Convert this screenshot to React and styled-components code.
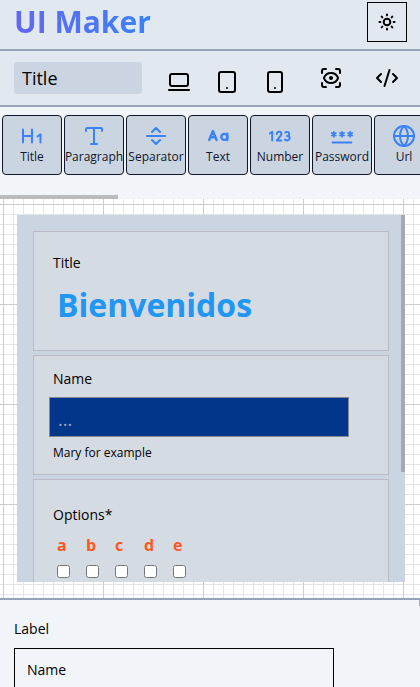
import React from "react";
import styled, { createGlobalStyle } from "styled-components";
import {
  CodeXml, Globe, LaptopMinimal, ScanEye,
  SeparatorHorizontal, Smartphone, Tablet, Type,
} from "lucide-react";

const GlobalStyle = createGlobalStyle`
  *, *::before, *::after { box-sizing: border-box; }
  body { margin: 0; color: #000; font-family: "Open Sans", "Noto Sans", sans-serif; }
  button, input { font: inherit; color: inherit; }
  button { cursor: pointer; }
`;

const Page = styled.div`
  display: grid;
  grid-template-columns: minmax(0, 1fr);
  grid-template-rows: auto auto auto minmax(0, 1fr) auto;
  height: 100vh;
  background: #f1f5f9;
`;

const Header = styled.header`
  display: flex;
  align-items: center;
  justify-content: space-between;
  height: 51px;
  padding: 0 13px 5px 14px;
  background: #e2e8f0;
  border-bottom: 2px solid #94a3b8;
`;

const Brand = styled.h1`
  margin: 0;
  font-size: 30px;
  line-height: 40px;
  font-weight: 700;
  color: transparent;
  background: linear-gradient(to right, #6366f1, #3b82f6);
  background-clip: text;
  -webkit-background-clip: text;
`;

const ThemeButton = styled.button`
  display: grid;
  place-items: center;
  width: 40px;
  height: 40px;
  padding: 0;
  background: transparent;
  border: 1px solid #000;
`;

const Toolbar = styled.div`
  display: flex;
  align-items: center;
  height: 56px;
  padding: 0 14px;
  background: #e2e8f0;
  border-bottom: 2px solid #94a3b8;
`;

const NameInput = styled.input`
  width: 128px;
  height: 32px;
  padding: 0 8px;
  font-size: 18px;
  background: #cbd5e1;
  border: 0;
  border-radius: 4px;
`;

const Devices = styled.div`
  display: flex;
  gap: 24px;
  padding-top: 8px;
  margin: 0 32px 0 25px;
`;

const Actions = styled.div`
  display: flex;
  gap: 32px;
`;

const IconButton = styled.button`
  display: flex;
  padding: 0;
  background: none;
  border: 0;
`;

const Palette = styled.nav`
  overflow: hidden;
`;

const PaletteRow = styled.div`
  display: flex;
  gap: 2px;
  padding: 8px 2px 20px;
`;

const PaletteItem = styled.button`
  display: flex;
  flex: none;
  flex-direction: column;
  align-items: center;
  justify-content: center;
  width: 60px;
  height: 60px;
  padding: 0;
  font-size: 12px;
  line-height: 18px;
  color: #0f172a;
  background: #cbd5e1;
  border: 1px solid #0f172a;
  border-radius: 4px;

  svg { flex: none; color: #3b82f6; }
`;

const PaletteThumb = styled.div`
  width: 28%;
  height: 4px;
  background: #b9bbbd;
`;

const Canvas = styled.main`
  display: flex;
  padding: 16px 15px 16px 17px;
  background-color: #fff;
  background-image:
    linear-gradient(#ccc 1px, transparent 1px),
    linear-gradient(90deg, #ccc 1px, transparent 1px),
    linear-gradient(#e5e5e5 1px, transparent 1px),
    linear-gradient(90deg, #e5e5e5 1px, transparent 1px);
  background-size: 100px 100px, 100px 100px, 10px 10px, 10px 10px;
  background-position: 3px 5px;
`;

const Preview = styled.form`
  position: relative;
  display: flex;
  flex: 1;
  flex-direction: column;
  gap: 4px;
  padding: 16px;
  overflow: hidden;
  background: #cbd5e1;
`;

const PreviewThumb = styled.div`
  position: absolute;
  top: 0;
  right: 0;
  width: 4px;
  height: 70%;
  background: #a3aab4;
`;

const Card = styled.section`
  display: flex;
  flex: none;
  flex-direction: column;
  align-items: flex-start;
  min-height: 120px;
  padding: ${(p) => p.$top}px 15px 8px;
  background: #d5dbe3;
  border: 1px solid #b9bac4;
`;

const FieldLabel = styled.label`
  padding-left: 4px;
  font-size: 14px;
  line-height: 20px;
`;

const Heading = styled.h2`
  margin: 10px 0 0;
  padding-left: 8px;
  font-size: 32px;
  line-height: 44px;
  font-weight: 700;
  color: #2196f3;
`;

const FieldInput = styled.input`
  width: 300px;
  max-width: 100%;
  height: 40px;
  margin: 8px 0 6px;
  padding: 4px 8px 0;
  font-size: 18px;
  color: #fff;
  background: #02368b;
  border: 1px solid #85888c;
  border-radius: 0;

  &::placeholder { color: #a3a9b5; opacity: 1; }
`;

const Hint = styled.small`
  padding-left: 4px;
  font-size: 12px;
  line-height: 20px;
`;

const Options = styled.div`
  display: flex;
  gap: 16px;
  padding: 9px 8px 0;
`;

const Option = styled.label`
  display: flex;
  flex-direction: column;
  gap: 9px;
  width: 13px;
  font-size: 16px;
  line-height: 22px;
  font-weight: 700;
  color: #ff5722;

  input { width: 13px; height: 13px; margin: 0; }
`;

const Properties = styled.aside`
  position: relative;
  display: flex;
  flex-direction: column;
  gap: 9px;
  height: 89px;
  padding: 19px 14px 0;
  overflow: hidden;
  border-top: 2px solid #94a3b8;
  font-size: 14px;
  line-height: 20px;
`;

const PropertyInput = styled.input`
  flex: none;
  width: 320px;
  max-width: 100%;
  height: 42px;
  padding: 0 12px;
  background: transparent;
  border: 1px solid #000;
  border-radius: 0;
`;

const PropertiesThumb = styled.div`
  position: absolute;
  top: 0;
  right: 0;
  width: 1px;
  height: 6px;
  background: #a9adb3;
`;

const Stroke = styled.svg.attrs({
  viewBox: "0 0 24 24",
  fill: "none",
  stroke: "currentColor",
  strokeLinecap: "round",
  strokeLinejoin: "round",
  "aria-hidden": true,
})`
  width: ${(p) => p.$size || 24}px;
  height: ${(p) => p.$size || 24}px;
  stroke-width: ${(p) => p.$weight || 2};
`;

const SunIcon = () => (
  <Stroke $size={20} $weight={2.4}>
    <circle cx="12" cy="12" r="4" />
    <path d="M12 3v1M12 20v1M3 12h1M20 12h1M5.600 5.600l.8.800M17.600 17.600l.8.800M18.400 5.600l-.8.800M6.400 17.600l-.8.800" />
  </Stroke>
);

const HeadingIcon = () => (
  <Stroke>
    <path d="M3 5.500v13M12 5.500v13M3 12h9M17.500 12.500l3-2.200v8.200" />
  </Stroke>
);

const LettersIcon = () => (
  <Stroke $weight={2.4}>
    <path d="M3.200 16l3.700-9 3.700 9M4.600 13.300h4.600M21.300 9.800V16" />
    <circle cx="18.300" cy="12.900" r="3" />
  </Stroke>
);

const NumberIcon = () => (
  <Stroke>
    <path d="M1.800 9.500l2.400-1.700v8.700" />
    <path d="M8.800 10a2.300 2.300 0 1 1 4.100 1.400L8.800 16.500h4.500" />
    <path d="M17.300 8.600c1.500-1.300 3.900-.6 3.900 1.300 0 1.200-.9 2-2.200 2 1.500 0 2.700.8 2.700 2.200 0 2.400-3.100 3-4.700 1.400" />
  </Stroke>
);

const star = (x) => `M${x} 7.800v5M${x - 2} 9l4 2.600M${x - 2} 11.600l4-2.600`;

const PasswordIcon = () => (
  <Stroke $weight={1.8}>
    <path d={star(3.8)} />
    <path d={star(12)} />
    <path d={star(20.2)} />
    <path d="M2.500 18.500h19" />
  </Stroke>
);

const ITEMS = [
  ["Title", HeadingIcon],
  ["Paragraph", Type],
  ["Separator", SeparatorHorizontal],
  ["Text", LettersIcon],
  ["Number", NumberIcon],
  ["Password", PasswordIcon],
  ["Url", Globe],
];

const DEVICES = [
  ["Laptop", LaptopMinimal],
  ["Tablet", Tablet],
  ["Phone", Smartphone],
];

const ACTIONS = [
  ["Preview", ScanEye],
  ["Code", CodeXml],
];

const IconButtons = ({ items }) =>
  items.map(([name, Icon]) => (
    <IconButton key={name} type="button" aria-label={name}>
      <Icon size={24} />
    </IconButton>
  ));

export default function App() {
  return (
    <>
      <GlobalStyle />
      <Page>
        <Header>
          <Brand>UI Maker</Brand>
          <ThemeButton type="button" aria-label="Toggle theme">
            <SunIcon />
          </ThemeButton>
        </Header>
        <Toolbar>
          <NameInput aria-label="Form name" defaultValue="Title" />
          <Devices><IconButtons items={DEVICES} /></Devices>
          <Actions><IconButtons items={ACTIONS} /></Actions>
        </Toolbar>
        <Palette>
          <PaletteRow>
            {ITEMS.map(([name, Icon]) => (
              <PaletteItem key={name} type="button">
                <Icon size={24} />
                {name}
              </PaletteItem>
            ))}
          </PaletteRow>
          <PaletteThumb />
        </Palette>
        <Canvas>
          <Preview>
            <Card $top={21}>
              <FieldLabel as="span">Title</FieldLabel>
              <Heading>Bienvenidos</Heading>
            </Card>
            <Card $top={13}>
              <FieldLabel htmlFor="name">Name</FieldLabel>
              <FieldInput id="name" placeholder="..." />
              <Hint>Mary for example</Hint>
            </Card>
            <Card $top={25}>
              <FieldLabel as="span">Options*</FieldLabel>
              <Options>
                {["a", "b", "c", "d", "e"].map((o) => (
                  <Option key={o}>
                    {o}
                    <input type="checkbox" />
                  </Option>
                ))}
              </Options>
            </Card>
            <PreviewThumb />
          </Preview>
        </Canvas>
        <Properties>
          <label htmlFor="label">Label</label>
          <PropertyInput id="label" defaultValue="Name" />
          <PropertiesThumb />
        </Properties>
      </Page>
    </>
  );
}
